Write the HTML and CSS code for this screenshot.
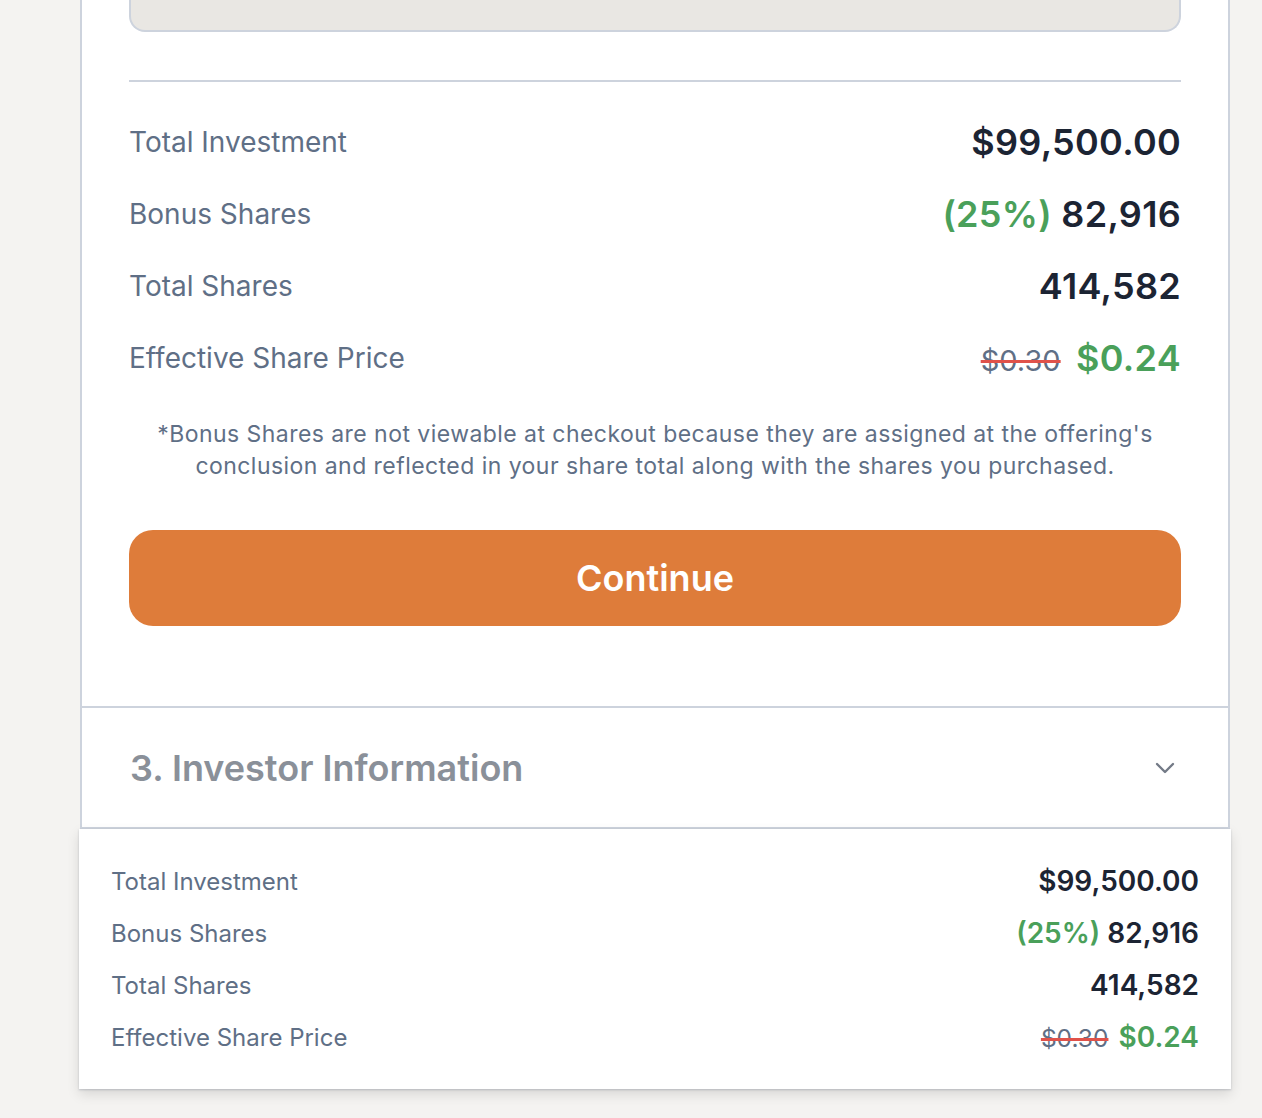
FILE: index.html
```html
<!DOCTYPE html>
<html>
<head>
<meta charset="utf-8">
<link rel="stylesheet" href="styles.css">
</head>
<body>
<div class="page">
  <div class="card">
    <div class="step">
      <div class="field-box"></div>
      <hr class="divider">
      <div class="rows">
        <div class="row"><span class="label">Total Investment</span><span class="value">$99,500.00</span></div>
        <div class="row"><span class="label">Bonus Shares</span><span class="value"><span class="green">(25%)</span> 82,916</span></div>
        <div class="row"><span class="label">Total Shares</span><span class="value">414,582</span></div>
        <div class="row"><span class="label">Effective Share Price</span><span class="value"><s class="old">$0.30</s> <span class="green">$0.24</span></span></div>
      </div>
      <p class="note">*Bonus Shares are not viewable at checkout because they are assigned at the offering's conclusion and reflected in your share total along with the shares you purchased.</p>
      <button class="continue">Continue</button>
    </div>
    <div class="section-head">
      <span class="section-title">3. Investor Information</span>
      <svg class="chev" width="20" height="12" viewBox="0 0 20 12" fill="none" stroke="currentColor" stroke-width="2.4" stroke-linecap="round" stroke-linejoin="round"><path d="M2 2l8 8 8-8"/></svg>
    </div>
  </div>
  <div class="summary">
    <div class="srow"><span class="slabel">Total Investment</span><span class="svalue">$99,500.00</span></div>
    <div class="srow"><span class="slabel">Bonus Shares</span><span class="svalue"><span class="green">(25%)</span> 82,916</span></div>
    <div class="srow"><span class="slabel">Total Shares</span><span class="svalue">414,582</span></div>
    <div class="srow"><span class="slabel">Effective Share Price</span><span class="svalue"><s class="old">$0.30</s> <span class="green">$0.24</span></span></div>
  </div>
</div>
</body>
</html>
```

FILE: styles.css
```css
* { box-sizing: border-box; }
html, body { margin: 0; padding: 0; }
body {
  background: #f4f3f1;
  font-family: Inter, "Noto Sans", sans-serif;
  height: 1118px;
  overflow: hidden;
}
.page {
  margin-left: 80px;
  width: 1150px;
}
.card {
  background: #fff;
  border-left: 2px solid #cdd3dd;
  border-right: 2px solid #cdd3dd;
  border-bottom: 2px solid #cdd3dd;
}
.step {
  padding: 0 47px 80px;
}
.field-box {
  height: 32px;
  background: #e9e7e3;
  border: 2px solid #cdd3dd;
  border-top: none;
  border-radius: 0 0 16px 16px;
}
.divider {
  margin: 48px 0 0;
  border: none;
  border-top: 2px solid #cdd3dd;
  height: 0;
}
.rows { margin-top: 24px; }
.row {
  height: 72px;
  display: flex;
  align-items: center;
  justify-content: space-between;
}
.label {
  font-size: 28px;
  color: #5f6f86;
}
.value {
  font-size: 36px;
  font-weight: 600;
  color: #1c2433;
  letter-spacing: 0.3px;
}
.green { color: #4aa05a; }
.old {
  color: #5f6f86;
  font-weight: 400;
  font-size: 29px;
  letter-spacing: 0;
  text-decoration-color: #e0524a;
  text-decoration-thickness: 3px;
  margin-right: 6px;
}
.note {
  margin: 24px 0 0;
  text-align: center;
  font-size: 23px;
  line-height: 32px;
  color: #5f6f86;
  letter-spacing: 0.45px;
}
.continue {
  display: block;
  width: 100%;
  margin-top: 48px;
  height: 96px;
  border: none;
  border-radius: 24px;
  background: #de7c3a;
  color: #fff;
  font-family: Inter, "Noto Sans", sans-serif;
  font-size: 36px;
  font-weight: 600;
}
.section-head {
  border-top: 2px solid #cdd3dd;
  height: 121px;
  padding: 0 53px 0 48px;
  display: flex;
  align-items: center;
  justify-content: space-between;
}
.section-title {
  font-size: 36px;
  font-weight: 600;
  color: #8a9099;
}
.chev { color: #737a86; }
.summary {
  background: #fff;
  margin: 0 -1px;
  padding: 26px 32px 26px 32px;
  box-shadow: 0 5px 12px rgba(0,0,0,0.12), 0 1px 2px rgba(100,110,130,0.3);
}
.srow {
  height: 52px;
  display: flex;
  align-items: center;
  justify-content: space-between;
}
.slabel {
  font-size: 24px;
  color: #5f6f86;
}
.svalue {
  font-size: 28px;
  font-weight: 600;
  color: #1c2433;
}
.svalue .old { font-size: 24.5px; margin-right: 3px; text-decoration-thickness: 2.5px; }
```
